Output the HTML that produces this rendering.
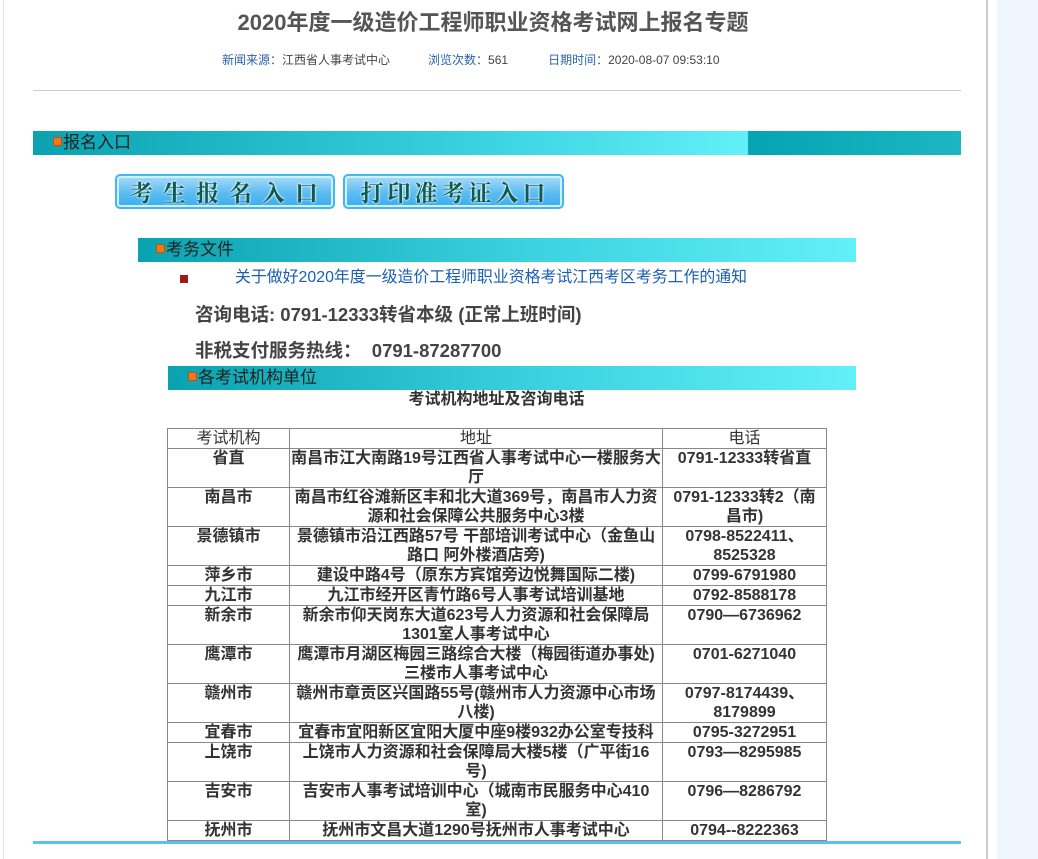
<!DOCTYPE html>
<html><head><meta charset="utf-8">
<style>
*{margin:0;padding:0;box-sizing:border-box}
body{width:1038px;height:859px;position:relative;background:#fff;font-family:"Liberation Sans","Noto Sans CJK SC",sans-serif;overflow:hidden}
.a{position:absolute}
.bar{position:absolute;height:24px;color:#222;font-size:17px;line-height:24px;white-space:nowrap}
.ic{display:inline-block;width:9px;height:9px;background:#f07818;border:1px solid #c05010;vertical-align:middle;margin-right:1px;position:relative;top:-2px}
.btn{position:absolute;height:35px;border-radius:5px;background:linear-gradient(#a8dcfa,#5cbcf0 55%,#3aaef0);border:2px solid #40b8f4;box-shadow:inset 0 0 0 2px #d4efff;color:#0e5a50;font-weight:bold;font-size:23px;line-height:31px;text-align:center;font-family:"Noto Serif CJK SC","Liberation Serif",serif;text-shadow:0 0 2px #fff,0 0 2px #fff;white-space:nowrap;overflow:hidden}
table{position:absolute;left:167px;top:428px;width:660px;border-collapse:collapse;border:1px solid #333;table-layout:fixed}
td{border:1px solid #888;text-align:center;vertical-align:top;font-weight:bold;font-size:16px;line-height:19px;color:#333;padding:0;white-space:nowrap;overflow:hidden}
</style></head><body>
<div class="a" style="left:3px;top:0;width:1px;height:859px;background:#e4e4e4"></div>
<div class="a" style="left:986px;top:0;width:2px;height:859px;background:#ccc"></div>
<div class="a" style="left:997px;top:0;width:41px;height:859px;background:#eff6fe"></div>
<div class="a" style="left:0;top:6px;width:986px;text-align:center;font-size:22px;font-weight:bold;color:#555;line-height:34px">2020年度一级造价工程师职业资格考试网上报名专题</div>
<div class="a" style="left:222px;top:52px;font-size:12px;color:#444;line-height:16px;white-space:nowrap"><span style="color:#2a62a8">新闻来源：</span>江西省人事考试中心<span style="display:inline-block;width:38px"></span><span style="color:#2a62a8">浏览次数：</span>561<span style="display:inline-block;width:40px"></span><span style="color:#2a62a8">日期时间：</span>2020-08-07 09:53:10</div>
<div class="a" style="left:33px;top:90px;width:928px;height:1px;background:#ccc"></div>
<div class="bar" style="left:33px;top:131px;width:928px;background:linear-gradient(90deg,#0aa2b0 0%,#3dd4e2 50%,#62f0f8 77%,#62f0f8 77%,#04a4b2 77.1%,#1cb6c2 100%)"><span style="margin-left:20px"><span class="ic"></span>报名入口</span></div>
<div class="btn" style="left:115px;top:174px;width:220px;letter-spacing:10px;text-indent:8px">考生报名入口</div>
<div class="btn" style="left:343px;top:174px;width:221px;letter-spacing:4px;text-indent:3px">打印准考证入口</div>
<div class="bar" style="left:138px;top:238px;width:718px;background:linear-gradient(90deg,#0aa2b0,#3cd2e0 55%,#62f0f8)"><span style="margin-left:18px"><span class="ic"></span>考务文件</span></div>
<div class="a" style="left:180px;top:275px;width:8px;height:8px;background:#a01818"></div>
<div class="a" style="left:235px;top:267px;font-size:15.9px;color:#1a5fb4;line-height:22px;white-space:nowrap">关于做好2020年度一级造价工程师职业资格考试江西考区考务工作的通知</div>
<div class="a" style="left:195px;top:301px;font-size:18.5px;font-weight:bold;color:#444;white-space:nowrap">咨询电话: 0791-12333转省本级 (正常上班时间)</div>
<div class="a" style="left:195px;top:337px;font-size:18.5px;font-weight:bold;color:#444;white-space:nowrap">非税支付服务热线：&nbsp; 0791-87287700</div>
<div class="bar" style="left:168px;top:366px;width:688px;background:linear-gradient(90deg,#0aa2b0,#3cd2e0 55%,#62f0f8)"><span style="margin-left:20px"><span class="ic"></span>各考试机构单位</span></div>
<div class="a" style="left:168px;top:390px;width:657px;text-align:center;font-size:16px;font-weight:bold;color:#333;line-height:20px">考试机构地址及咨询电话</div>
<table>
<colgroup><col style="width:122px"><col style="width:373px"><col></colgroup>
<tr><td style="font-weight:normal">考试机构</td><td style="font-weight:normal">地址</td><td style="font-weight:normal">电话</td></tr>
<tr><td>省直</td><td>南昌市江大南路19号江西省人事考试中心一楼服务大<br>厅</td><td>0791-12333转省直</td></tr>
<tr><td>南昌市</td><td>南昌市红谷滩新区丰和北大道369号，南昌市人力资<br>源和社会保障公共服务中心3楼</td><td>0791-12333转2（南<br>昌市)</td></tr>
<tr><td>景德镇市</td><td>景德镇市沿江西路57号 干部培训考试中心（金鱼山<br>路口 阿外楼酒店旁)</td><td>0798-8522411、<br>8525328</td></tr>
<tr><td>萍乡市</td><td>建设中路4号（原东方宾馆旁边悦舞国际二楼)</td><td>0799-6791980</td></tr>
<tr><td>九江市</td><td>九江市经开区青竹路6号人事考试培训基地</td><td>0792-8588178</td></tr>
<tr><td>新余市</td><td>新余市仰天岗东大道623号人力资源和社会保障局<br>1301室人事考试中心</td><td>0790—6736962</td></tr>
<tr><td>鹰潭市</td><td>鹰潭市月湖区梅园三路综合大楼（梅园街道办事处)<br>三楼市人事考试中心</td><td>0701-6271040</td></tr>
<tr><td>赣州市</td><td>赣州市章贡区兴国路55号(赣州市人力资源中心市场<br>八楼)</td><td>0797-8174439、<br>8179899</td></tr>
<tr><td>宜春市</td><td>宜春市宜阳新区宜阳大厦中座9楼932办公室专技科</td><td>0795-3272951</td></tr>
<tr><td>上饶市</td><td>上饶市人力资源和社会保障局大楼5楼（广平街16<br>号)</td><td>0793—8295985</td></tr>
<tr><td>吉安市</td><td>吉安市人事考试培训中心（城南市民服务中心410<br>室)</td><td>0796—8286792</td></tr>
<tr><td>抚州市</td><td>抚州市文昌大道1290号抚州市人事考试中心</td><td>0794--8222363</td></tr>
</table>
<div class="a" style="left:33px;top:841px;width:928px;height:3px;background:#5cc0f4"></div>
</body></html>
